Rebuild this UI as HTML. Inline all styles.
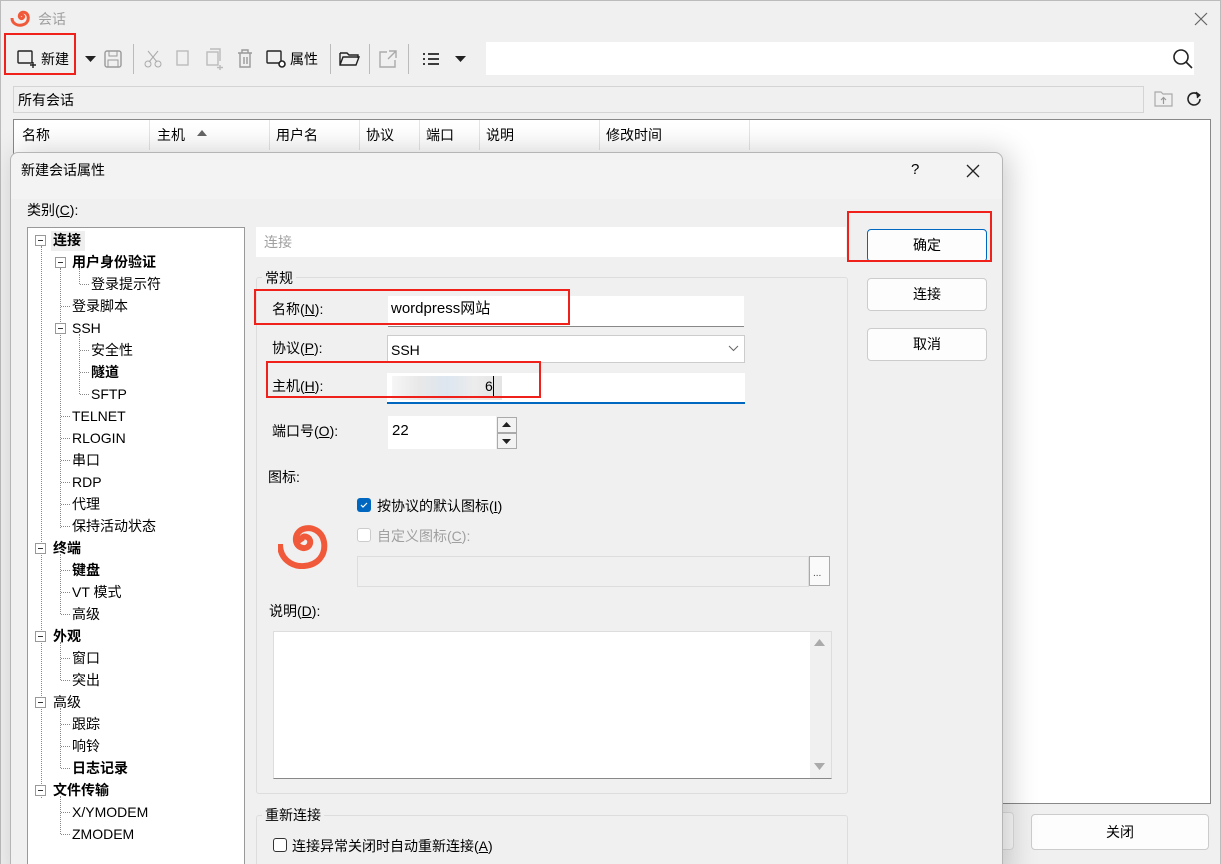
<!DOCTYPE html>
<html><head><meta charset="utf-8">
<style>
*{box-sizing:border-box;margin:0;padding:0}
html{overflow:hidden}
body{width:1221px;height:864px;overflow:hidden;background:#f0f0f0;position:relative;font-family:"Liberation Sans","Noto Sans CJK SC",sans-serif;font-size:14px;color:#000}
.a{position:absolute}
.t{position:absolute;white-space:nowrap;line-height:18px}
.b{font-weight:bold}
.red{position:absolute;border:2px solid #f0201a}
.btn{position:absolute;background:#fdfdfd;border:1px solid #ccc;border-radius:4px;text-align:center;line-height:30px}
.gray{color:#a0a0a0}
.box{position:absolute;width:11px;height:11px;border:1px solid #999;background:#fff}
.box:after{content:"";position:absolute;left:2px;top:4px;width:5px;height:1px;background:#333}
.dv{position:absolute;border-left:1px dotted #888;width:0}
.dh{position:absolute;border-top:1px dotted #888;height:0}
u{text-decoration:underline}
</style></head><body>
<div class="a" style="left:0;top:0;width:1221px;height:880px;background:#f0f0f0;border:1px solid #bbb"></div>
<svg class="a" style="left:10px;top:9px" width="22" height="18" viewBox="0 0 22 18"><path d="M2 9 C2 15 8 17 12 16 C17 15 19 11 18 7 C17 3 12 2 10 5 C8 8 11 11 13 9 C15 7 12 5 11 7" fill="none" stroke="#f05a3a" stroke-width="3"/></svg>
<div class="t gray" style="left:38px;top:10px">会话</div>
<svg class="a" style="left:1194px;top:12px" width="14" height="14"><path d="M1 1L13 13M13 1L1 13" stroke="#666" stroke-width="1.2"/></svg>
<div class="red" style="left:4px;top:33px;width:72px;height:42px"></div>
<svg class="a" style="left:17px;top:50px" width="22" height="18"><rect x="1" y="1" width="14" height="12" rx="1" fill="none" stroke="#222" stroke-width="1.4"/><path d="M16 12v6M13 15h6" stroke="#222" stroke-width="1.4"/></svg>
<div class="t" style="left:41px;top:50px">新建</div>
<svg class="a" style="left:85px;top:56px" width="11" height="6"><path d="M0 0h11L5.5 6z" fill="#222"/></svg>
<svg class="a" style="left:103px;top:49px" width="20" height="20"><rect x="2" y="2" width="16" height="16" rx="2" fill="none" stroke="#999" stroke-width="1.4"/><rect x="6" y="2" width="8" height="5" fill="none" stroke="#999"/><rect x="5" y="11" width="10" height="7" fill="none" stroke="#999"/></svg>
<div class="a" style="left:133px;top:44px;width:1px;height:30px;background:#bbb"></div>
<svg class="a" style="left:144px;top:50px" width="18" height="18"><circle cx="4" cy="14" r="3" fill="none" stroke="#aaa"/><circle cx="14" cy="14" r="3" fill="none" stroke="#aaa"/><path d="M5 12L14 1M13 12L4 1" stroke="#aaa"/></svg>
<svg class="a" style="left:174px;top:49px" width="18" height="20"><rect x="3" y="2" width="11" height="14" fill="none" stroke="#bbb" stroke-width="1.4"/></svg>
<svg class="a" style="left:205px;top:48px" width="20" height="22"><rect x="2" y="4" width="11" height="13" fill="none" stroke="#bbb" stroke-width="1.4"/><path d="M5 1h10v12M15 17v5M12 19.5h6" stroke="#bbb" stroke-width="1.4" fill="none"/></svg>
<svg class="a" style="left:236px;top:49px" width="18" height="20"><path d="M2 4h14M6 4V1h6v3M4 4v14h10V4M8 8v7M11 8v7" stroke="#999" stroke-width="1.4" fill="none"/></svg>
<svg class="a" style="left:266px;top:50px" width="22" height="18"><rect x="1" y="1" width="14" height="12" rx="1" fill="none" stroke="#222" stroke-width="1.4"/><circle cx="16" cy="14" r="3" fill="#fff" stroke="#222" stroke-width="1.6"/></svg>
<div class="t" style="left:290px;top:50px">属性</div>
<div class="a" style="left:330px;top:44px;width:1px;height:30px;background:#bbb"></div>
<svg class="a" style="left:339px;top:51px" width="22" height="16"><path d="M1 2h7l2 2h9v3M1 2v12h16l3-8H4L1 14" fill="none" stroke="#222" stroke-width="1.4"/></svg>
<div class="a" style="left:369px;top:44px;width:1px;height:30px;background:#bbb"></div>
<svg class="a" style="left:378px;top:49px" width="20" height="20"><path d="M9 3H2v15h15v-7M11 2h7v7M18 2l-8 8" fill="none" stroke="#aaa" stroke-width="1.4"/></svg>
<div class="a" style="left:408px;top:44px;width:1px;height:30px;background:#bbb"></div>
<svg class="a" style="left:422px;top:52px" width="18" height="14"><path d="M1 2h2M1 7h2M1 12h2M6 2h11M6 7h11M6 12h11" stroke="#222" stroke-width="1.8"/></svg>
<svg class="a" style="left:455px;top:56px" width="11" height="6"><path d="M0 0h11L5.5 6z" fill="#222"/></svg>
<div class="a" style="left:486px;top:42px;width:708px;height:33px;background:#fff"></div>
<svg class="a" style="left:1172px;top:48px" width="22" height="22"><circle cx="9" cy="9" r="7" fill="none" stroke="#222" stroke-width="1.6"/><path d="M14 14l6 6" stroke="#222" stroke-width="1.6"/></svg>
<div class="a" style="left:13px;top:86px;width:1131px;height:27px;background:#f0f0f0;border:1px solid #d4d4d4"></div>
<div class="t" style="left:18px;top:91px">所有会话</div>
<svg class="a" style="left:1154px;top:90px" width="20" height="18"><path d="M1 2h6l2 2h9v12H1z" fill="none" stroke="#aaa" stroke-width="1.2"/><path d="M9.5 14V8M7 10l2.5-2.5L12 10" fill="none" stroke="#999" stroke-width="1.2"/></svg>
<svg class="a" style="left:1185px;top:90px" width="20" height="18"><path d="M15 9a6 6 0 1 1-2-4.5" fill="none" stroke="#222" stroke-width="1.6"/><path d="M11 2l4 3-3 3" fill="#222" stroke="#222"/></svg>
<div class="a" style="left:13px;top:119px;width:1198px;height:685px;background:#fff;border:1px solid #888"></div>
<div class="t" style="left:22px;top:126px">名称</div>
<div class="a" style="left:149px;top:120px;width:1px;height:30px;background:#e5e5e5"></div>
<div class="t" style="left:157px;top:126px">主机</div>
<svg class="a" style="left:197px;top:130px" width="10" height="6"><path d="M0 6h10L5 0z" fill="#666"/></svg>
<div class="a" style="left:269px;top:120px;width:1px;height:30px;background:#e5e5e5"></div>
<div class="t" style="left:276px;top:126px">用户名</div>
<div class="a" style="left:359px;top:120px;width:1px;height:30px;background:#e5e5e5"></div>
<div class="t" style="left:366px;top:126px">协议</div>
<div class="a" style="left:419px;top:120px;width:1px;height:30px;background:#e5e5e5"></div>
<div class="t" style="left:426px;top:126px">端口</div>
<div class="a" style="left:479px;top:120px;width:1px;height:30px;background:#e5e5e5"></div>
<div class="t" style="left:486px;top:126px">说明</div>
<div class="a" style="left:599px;top:120px;width:1px;height:30px;background:#e5e5e5"></div>
<div class="t" style="left:606px;top:126px">修改时间</div>
<div class="a" style="left:749px;top:120px;width:1px;height:30px;background:#e5e5e5"></div>
<div class="a" style="left:960px;top:812px;width:54px;height:38px;background:#fafafa;border:1px solid #ddd;border-radius:4px"></div>
<div class="btn" style="left:1031px;top:814px;width:178px;height:36px;line-height:34px">关闭</div>

<div class="a" style="left:10px;top:152px;width:993px;height:730px;background:#f0f0f0;border:1px solid #b5b5b5;border-radius:8px 8px 0 0;box-shadow:6px 0 30px rgba(0,0,0,0.2)"></div>
<div class="a" style="left:11px;top:153px;width:991px;height:46px;background:#f3f3f3;border-radius:8px 8px 0 0"></div>
<div class="t" style="left:21px;top:161px">新建会话属性</div>
<div class="t" style="left:911px;top:161px;font-size:15px">?</div>
<svg class="a" style="left:966px;top:164px" width="14" height="14"><path d="M1 1L13 13M13 1L1 13" stroke="#222" stroke-width="1.3"/></svg>
<div class="t" style="left:27px;top:201px">类别(<u>C</u>):</div>
<div class="a" style="left:27px;top:227px;width:218px;height:660px;background:#fff;border:1px solid #999"></div>
<div class="a" style="left:51px;top:231px;width:34px;height:20px;background:#eee"></div>
<div class="dv" style="left:41px;top:246px;height:552px"></div>
<div class="dv" style="left:60px;top:268px;height:260px"></div>
<div class="dv" style="left:79px;top:268px;height:16px"></div>
<div class="dv" style="left:79px;top:334px;height:60px"></div>
<div class="dv" style="left:60px;top:554px;height:60px"></div>
<div class="dv" style="left:60px;top:642px;height:38px"></div>
<div class="dv" style="left:60px;top:708px;height:60px"></div>
<div class="dv" style="left:60px;top:796px;height:38px"></div>
<div class="box" style="left:35px;top:235px"></div>
<div class="t b" style="left:53px;top:231px">连接</div>
<div class="box" style="left:55px;top:257px"></div>
<div class="t b" style="left:72px;top:253px">用户身份验证</div>
<div class="dh" style="left:80px;top:284px;width:9px"></div><div class="t" style="left:91px;top:275px">登录提示符</div>
<div class="dh" style="left:61px;top:306px;width:9px"></div><div class="t" style="left:72px;top:297px">登录脚本</div>
<div class="box" style="left:55px;top:323px"></div>
<div class="t" style="left:72px;top:319px">SSH</div>
<div class="dh" style="left:80px;top:350px;width:9px"></div><div class="t" style="left:91px;top:341px">安全性</div>
<div class="dh" style="left:80px;top:372px;width:9px"></div><div class="t b" style="left:91px;top:363px">隧道</div>
<div class="dh" style="left:80px;top:394px;width:9px"></div><div class="t" style="left:91px;top:385px">SFTP</div>
<div class="dh" style="left:61px;top:416px;width:9px"></div><div class="t" style="left:72px;top:407px">TELNET</div>
<div class="dh" style="left:61px;top:438px;width:9px"></div><div class="t" style="left:72px;top:429px">RLOGIN</div>
<div class="dh" style="left:61px;top:460px;width:9px"></div><div class="t" style="left:72px;top:451px">串口</div>
<div class="dh" style="left:61px;top:482px;width:9px"></div><div class="t" style="left:72px;top:473px">RDP</div>
<div class="dh" style="left:61px;top:504px;width:9px"></div><div class="t" style="left:72px;top:495px">代理</div>
<div class="dh" style="left:61px;top:526px;width:9px"></div><div class="t" style="left:72px;top:517px">保持活动状态</div>
<div class="box" style="left:35px;top:543px"></div><div class="t b" style="left:53px;top:539px">终端</div>
<div class="dh" style="left:61px;top:570px;width:9px"></div><div class="t b" style="left:72px;top:561px">键盘</div>
<div class="dh" style="left:61px;top:592px;width:9px"></div><div class="t" style="left:72px;top:583px">VT 模式</div>
<div class="dh" style="left:61px;top:614px;width:9px"></div><div class="t" style="left:72px;top:605px">高级</div>
<div class="box" style="left:35px;top:631px"></div><div class="t b" style="left:53px;top:627px">外观</div>
<div class="dh" style="left:61px;top:658px;width:9px"></div><div class="t" style="left:72px;top:649px">窗口</div>
<div class="dh" style="left:61px;top:680px;width:9px"></div><div class="t" style="left:72px;top:671px">突出</div>
<div class="box" style="left:35px;top:697px"></div><div class="t" style="left:53px;top:693px">高级</div>
<div class="dh" style="left:61px;top:724px;width:9px"></div><div class="t" style="left:72px;top:715px">跟踪</div>
<div class="dh" style="left:61px;top:746px;width:9px"></div><div class="t" style="left:72px;top:737px">响铃</div>
<div class="dh" style="left:61px;top:768px;width:9px"></div><div class="t b" style="left:72px;top:759px">日志记录</div>
<div class="box" style="left:35px;top:785px"></div><div class="t b" style="left:53px;top:781px">文件传输</div>
<div class="dh" style="left:61px;top:812px;width:9px"></div><div class="t" style="left:72px;top:803px">X/YMODEM</div>
<div class="dh" style="left:61px;top:834px;width:9px"></div><div class="t" style="left:72px;top:825px">ZMODEM</div>

<div class="a" style="left:256px;top:227px;width:590px;height:30px;background:#fff"></div>
<div class="t gray" style="left:264px;top:233px">连接</div>
<div class="a" style="left:256px;top:277px;width:592px;height:517px;border:1px solid #ddd;border-radius:3px"></div>
<div class="a t" style="left:262px;top:269px;background:#f0f0f0;padding:0 3px">常规</div>
<div class="t" style="left:272px;top:300px">名称(<u>N</u>):</div>
<div class="a" style="left:388px;top:296px;width:356px;height:31px;background:#fff;border-bottom:1px solid #888"></div>
<div class="t" style="left:391px;top:300px;font-size:15px">wordpress网站</div>
<div class="red" style="left:254px;top:289px;width:316px;height:36px"></div>
<div class="t" style="left:272px;top:339px">协议(<u>P</u>):</div>
<div class="a" style="left:387px;top:335px;width:358px;height:28px;background:#fff;border:1px solid #ccc"></div>
<div class="t" style="left:391px;top:341px">SSH</div>
<svg class="a" style="left:728px;top:345px" width="11" height="7"><path d="M1 1l4.5 4.5L10 1" fill="none" stroke="#666"/></svg>
<div class="t" style="left:272px;top:377px">主机(<u>H</u>):</div>
<div class="a" style="left:387px;top:373px;width:358px;height:31px;background:#fff;border-bottom:2px solid #0067c0"></div>
<div class="a" style="left:392px;top:376px;width:110px;height:24px;background:linear-gradient(90deg,#f6f6f6,#e8e8e8,#dde6f0,#ececec,#e4e4e4)"></div>
<div class="t" style="left:485px;top:377px">6</div>
<div class="a" style="left:493px;top:376px;width:1px;height:20px;background:#000"></div>
<div class="red" style="left:266px;top:361px;width:275px;height:37px"></div>
<div class="t" style="left:272px;top:422px">端口号(<u>O</u>):</div>
<div class="a" style="left:388px;top:416px;width:108px;height:33px;background:#fff"></div>
<div class="t" style="left:392px;top:422px;font-size:15px">22</div>
<div class="a" style="left:497px;top:417px;width:20px;height:16px;background:#f3f3f3;border:1px solid #aaa"></div>
<div class="a" style="left:497px;top:433px;width:20px;height:16px;background:#f3f3f3;border:1px solid #aaa"></div>
<svg class="a" style="left:502px;top:422px" width="9" height="5"><path d="M0 5h9L4.5 0z" fill="#222"/></svg>
<svg class="a" style="left:502px;top:439px" width="9" height="5"><path d="M0 0h9L4.5 5z" fill="#222"/></svg>
<div class="t" style="left:268px;top:468px">图标:</div>
<div class="a" style="left:357px;top:498px;width:14px;height:14px;background:#0067c0;border-radius:3px"></div>
<svg class="a" style="left:357px;top:498px" width="14" height="14"><path d="M4 7l2 2 4-4" fill="none" stroke="#fff" stroke-width="1.2"/></svg>
<div class="t" style="left:377px;top:497px">按协议的默认图标(<u>I</u>)</div>
<div class="a" style="left:357px;top:528px;width:14px;height:14px;background:#fff;border:1px solid #ccc;border-radius:3px"></div>
<div class="t gray" style="left:377px;top:527px">自定义图标(<u>C</u>):</div>
<svg class="a" style="left:278px;top:525px" width="50" height="44" viewBox="0 0 50 44"><path d="M2 19 C2 34 14 42 26 41 C40 40 48 30 46 17 C44 6 34 1 25 4 C15 8 16 22 25 23 C32 24 35 15 29 12 C25 10 22 14 24 17" fill="none" stroke="#f05a3a" stroke-width="6"/></svg>
<div class="a" style="left:357px;top:556px;width:452px;height:31px;background:#f0f0f0;border:1px solid #ddd"></div>
<div class="a" style="left:809px;top:556px;width:21px;height:30px;background:#fafafa;border:1px solid #aaa"></div>
<div class="t" style="left:813px;top:565px;font-size:10px;color:#444">...</div>
<div class="t" style="left:269px;top:602px">说明(<u>D</u>):</div>
<div class="a" style="left:273px;top:631px;width:559px;height:148px;background:#fff;border:1px solid #ddd;border-bottom:1px solid #888"></div>
<div class="a" style="left:810px;top:632px;width:21px;height:146px;background:#f0f0f0"></div>
<svg class="a" style="left:814px;top:639px" width="11" height="7"><path d="M0 7h11L5.5 0z" fill="#aaa"/></svg>
<svg class="a" style="left:814px;top:763px" width="11" height="7"><path d="M0 0h11L5.5 7z" fill="#aaa"/></svg>
<div class="a" style="left:256px;top:815px;width:592px;height:70px;border:1px solid #ddd;border-radius:3px"></div>
<div class="a t" style="left:262px;top:806px;background:#f0f0f0;padding:0 3px">重新连接</div>
<div class="a" style="left:273px;top:838px;width:14px;height:14px;background:#fff;border:1px solid #333;border-radius:3px"></div>
<div class="t" style="left:292px;top:837px">连接异常关闭时自动重新连接(<u>A</u>)</div>
<div class="btn" style="left:867px;top:229px;width:120px;height:33px;border-color:#0067c0">确定</div>
<div class="red" style="left:847px;top:211px;width:145px;height:51px"></div>
<div class="btn" style="left:867px;top:278px;width:120px;height:33px">连接</div>
<div class="btn" style="left:867px;top:328px;width:120px;height:33px">取消</div>
</body></html>
